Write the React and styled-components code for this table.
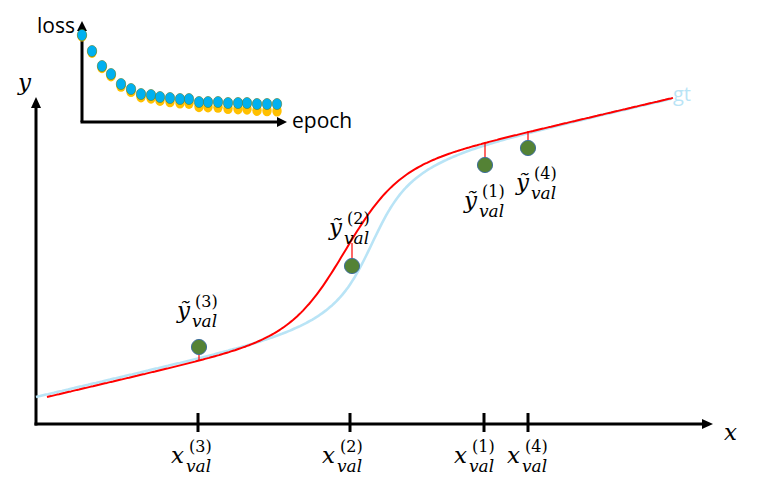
import React from 'react';
import styled, { createGlobalStyle } from 'styled-components';

const GlobalStyle = createGlobalStyle`
  html, body {
    margin: 0;
    padding: 0;
    background: #ffffff;
  }
`;

const Canvas = styled.div`
  width: 760px;
  height: 491px;
  background: #ffffff;
  overflow: hidden;
`;

const Plot = styled.svg`
  display: block;
  width: 760px;
  height: 491px;
`;

const Caption = styled.text`
  font-family: "Open Sans", "Noto Sans", sans-serif;
  font-size: ${(p) => p.$size || 21}px;
  fill: ${(p) => p.$color || '#000000'};
`;

const MathMain = styled.text`
  font-family: "DejaVu Serif", "Liberation Serif", serif;
  font-style: italic;
  font-size: 23px;
  fill: #000000;
`;

const MathSup = styled.text`
  font-family: "DejaVu Serif", "Liberation Serif", serif;
  font-size: 16px;
  fill: #000000;
`;

const MathSub = styled.text`
  font-family: "DejaVu Serif", "Liberation Serif", serif;
  font-style: italic;
  font-size: 17px;
  fill: #000000;
`;

const logistic = (t) => 1 / (1 + Math.exp(-t));

// a sloped line with a sigmoid step added to it
function curvePath({ x0, x1, y0, slope, amp, center, widths }) {
  const pts = [];
  for (let x = x0; x <= x1; x += 2) {
    const s = widths.reduce((acc, w) => acc + logistic((x - center) / w), 0) / widths.length;
    const y = y0 - slope * (x - x0) - amp * s;
    pts.push(`${x.toFixed(1)},${y.toFixed(1)}`);
  }
  return `M${pts.join(' L')}`;
}

const gtCurve = curvePath({ x0: 36, x1: 673, y0: 397, slope: 0.235, amp: 149, center: 372, widths: [14, 35] });
const predCurve = curvePath({ x0: 47, x1: 673, y0: 397, slope: 0.235, amp: 152, center: 345, widths: [24, 30] });

const lossDots = [
  [82, 35], [92, 51], [102, 66], [111, 74], [121, 84], [131, 89], [141, 94],
  [151, 95], [160, 97], [170, 98], [180, 99], [189, 99], [199, 102], [208, 102],
  [218, 102], [228, 103], [238, 103], [247, 103], [257, 104], [267, 104], [277, 104],
];

const samples = [
  { sup: '(3)', x: 199, dot: 347, from: 355, to: 360, label: [177, 318], tick: 198, xl: 171 },
  { sup: '(2)', x: 352, dot: 266, from: 243, to: 258, label: [329, 235], tick: 350, xl: 322 },
  { sup: '(1)', x: 485, dot: 165, from: 142, to: 157, label: [464, 208], tick: 484, xl: 454 },
  { sup: '(4)', x: 528, dot: 148, from: 131, to: 140, label: [516, 190], tick: 528, xl: 507 },
];

function ValLabel({ x, y, base, sup }) {
  return (
    <g>
      <MathMain x={x} y={y}>{base}</MathMain>
      <MathSup x={x + 18} y={y - 11}>{sup}</MathSup>
      <MathSub x={x + 15} y={y + 9}>val</MathSub>
    </g>
  );
}

function LossInset() {
  return (
    <g>
      <line x1="82" y1="122" x2="82" y2="30" stroke="#000" strokeWidth="3" />
      <polygon points="82,21 77,31 87,31" fill="#000" />
      <line x1="80.5" y1="122" x2="277" y2="122" stroke="#000" strokeWidth="3" />
      <polygon points="287,122 277,117 277,127" fill="#000" />
      {lossDots.map(([cx, cy], i) => (
        <ellipse
          key={`y${i}`}
          cx={cx}
          cy={cy + 1 + (6 * i) / 20}
          rx="4.7"
          ry="5.6"
          fill="#FFC000"
        />
      ))}
      {lossDots.map(([cx, cy], i) => (
        <ellipse
          key={`b${i}`}
          cx={cx}
          cy={cy}
          rx="4.7"
          ry="5.6"
          fill="#00B0F0"
          stroke="#4E7F3A"
          strokeWidth="0.6"
        />
      ))}
      <Caption x="37" y="33">loss</Caption>
      <Caption x="292" y="128">epoch</Caption>
    </g>
  );
}

export default function App() {
  return (
    <Canvas>
      <GlobalStyle />
      <Plot viewBox="0 0 760 491">
        {/* main axes */}
        <line x1="36" y1="425.5" x2="36" y2="106" stroke="#000" strokeWidth="3" />
        <polygon points="36,97 31,108 41,108" fill="#000" />
        <line x1="34.5" y1="424" x2="703" y2="424" stroke="#000" strokeWidth="3" />
        <polygon points="713,424 702,419 702,429" fill="#000" />
        <MathMain x="18" y="90">y</MathMain>
        <MathMain x="724" y="440">x</MathMain>

        <LossInset />

        {/* curves */}
        <path d={gtCurve} fill="none" stroke="#B9E4F6" strokeWidth="2.6" strokeLinejoin="round" />
        <path d={predCurve} fill="none" stroke="#FF0000" strokeWidth="2" strokeLinejoin="round" />
        <Caption x="673" y="101" $size={20} $color="#B9E4F6">gt</Caption>

        {/* validation samples */}
        {samples.map((s) => (
          <g key={s.sup}>
            <line x1={s.x} y1={s.from} x2={s.x} y2={s.to} stroke="#FF0000" strokeWidth="1.2" />
            <circle cx={s.x} cy={s.dot} r="7.6" fill="#548235" stroke="#41719C" strokeWidth="1" />
            <ValLabel x={s.label[0]} y={s.label[1]} base="ỹ" sup={s.sup} />
            <line x1={s.tick} y1="413" x2={s.tick} y2="432" stroke="#000" strokeWidth="3" />
            <ValLabel x={s.xl} y={463} base="x" sup={s.sup} />
          </g>
        ))}
      </Plot>
    </Canvas>
  );
}
